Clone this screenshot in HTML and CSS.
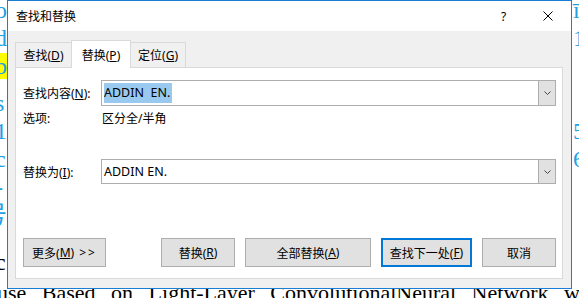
FILE: index.html
```html
<!DOCTYPE html>
<html lang="zh-CN">
<head>
    <meta charset="UTF-8">
    <meta name="viewport" content="width=device-width, initial-scale=1.0">
    <title>查找和替换</title>
    <link rel="stylesheet" href="styles.css">
</head>
<body>
    <div class="doc">
        <div class="line"><span class="l">o</span><span class="r">ī</span></div>
        <div class="line"><span class="l">d</span><span class="r">1</span></div>
        <div class="line"><span class="l"><span class="hl">b</span></span><span class="r"></span></div>
        <div class="gap-s"></div>
        <div class="line"><span class="l">s</span><span class="r"></span></div>
        <div class="line"><span class="l">1</span><span class="r">5</span></div>
        <div class="line"><span class="l">c</span><span class="r">6</span></div>
        <div class="line"><span class="l">-</span><span class="r"></span></div>
        <div class="line"><span class="l wide">号</span><span class="r"></span></div>
        <div class="gap-l"></div>
        <div class="line dark"><span class="l">c</span><span class="r"></span></div>
        <div class="line dark text"><span class="l">use Based on Light-Layer ConvolutionalNeural Network w</span></div>
    </div>

    <div class="dialog">
        <div class="titlebar">
            <span class="title">查找和替换</span>
            <span class="tb-btn help">?</span>
            <span class="tb-btn">
                <svg width="10" height="10" viewBox="0 0 10 10">
                    <path d="M0.5 0.5L9.5 9.5M9.5 0.5L0.5 9.5" stroke="#000" stroke-width="1" fill="none"/>
                </svg>
            </span>
        </div>

        <div class="body">
            <div class="tabs">
                <div class="tab tab-find">查找(<u>D</u>)</div>
                <div class="tab tab-replace active">替换(<u>P</u>)</div>
                <div class="tab tab-goto">定位(<u>G</u>)</div>
            </div>

            <div class="panel">
                <div class="field-row find-row">
                    <label>查找内容(<u>N</u>):</label>
                    <div class="combo">
                        <div class="combo-text"><span class="sel">ADDIN  EN.</span></div>
                        <div class="combo-btn">
                            <svg width="7" height="4" viewBox="0 0 7 4">
                                <path d="M0.5 0.5L3.5 3.5L6.5 0.5" stroke="#444" stroke-width="1" fill="none"/>
                            </svg>
                        </div>
                    </div>
                </div>

                <div class="field-row opts-row">
                    <label>选项:</label>
                    <span class="opts">区分全/半角</span>
                </div>

                <div class="field-row repl-row">
                    <label>替换为(<u>I</u>):</label>
                    <div class="combo">
                        <div class="combo-text">ADDIN EN.</div>
                        <div class="combo-btn">
                            <svg width="7" height="4" viewBox="0 0 7 4">
                                <path d="M0.5 0.5L3.5 3.5L6.5 0.5" stroke="#444" stroke-width="1" fill="none"/>
                            </svg>
                        </div>
                    </div>
                </div>

                <div class="buttons">
                    <button class="btn btn-more">更多(<u>M</u>) <span class="arrows">&gt;&gt;</span></button>
                    <span class="spacer"></span>
                    <button class="btn btn-replace">替换(<u>R</u>)</button>
                    <button class="btn btn-all">全部替换(<u>A</u>)</button>
                    <button class="btn btn-next default">查找下一处(<u>F</u>)</button>
                    <button class="btn btn-cancel">取消</button>
                </div>
            </div>
        </div>
    </div>
</body>
</html>
```

FILE: styles.css
```css
* {
    margin: 0;
    padding: 0;
    box-sizing: border-box;
}

body {
    width: 579px;
    height: 298px;
    overflow: hidden;
    position: relative;
    background: #fff;
    font-family: "Noto Sans", "Noto Sans CJK SC", sans-serif;
    font-size: 12px;
    color: #000;
}

u {
    text-decoration: underline;
    text-underline-offset: 1px;
}

/* document behind the dialog */
.doc {
    margin-top: -4px;
    font-family: "Liberation Serif", "Noto Sans CJK SC", serif;
    font-size: 24px;
    color: #22a0e6;
}

.line {
    display: flex;
    height: 28px;
    line-height: 28px;
    white-space: nowrap;
}

.line .l {
    flex: 0 0 578px;
    margin-left: -5px;
}

.line .l.wide {
    text-indent: -12px;
}

.hl {
    background: #ffff00;
}

.gap-s {
    height: 9px;
}

.gap-l {
    height: 19px;
}

.line.dark {
    color: #000;
}

.line.text {
    margin-top: 3px;
    font-size: 22px;
    word-spacing: 10px;
}

.line.text .l {
    margin-left: -3px;
}

/* dialog */
.dialog {
    position: absolute;
    left: 7px;
    top: 0;
    width: 565px;
    height: 289px;
    border: 1px solid #1a7fd4;
    background: #f0f0f0;
    display: flex;
    flex-direction: column;
}

.titlebar {
    height: 30px;
    background: #fff;
    display: flex;
    align-items: center;
    padding-left: 8px;
}

.title {
    flex: 1;
}

.tb-btn {
    width: 46px;
    height: 30px;
    display: flex;
    align-items: center;
    justify-content: center;
}

.tb-btn.help {
    padding-left: 3px;
}

.body {
    flex: 1;
    padding: 9px 8px 9px 7px;
    display: flex;
    flex-direction: column;
}

.tabs {
    display: flex;
    align-items: flex-end;
    height: 27px;
    position: relative;
    z-index: 1;
}

.tab {
    height: 25px;
    border: 1px solid #d9d9d9;
    border-bottom: none;
    background: #f0f0f0;
    display: flex;
    align-items: center;
    justify-content: center;
}

.tab + .tab {
    margin-left: -1px;
}

.tab-find {
    width: 57px;
}

.tab-replace {
    width: 60px;
}

.tab-goto {
    width: 56px;
}

.tab.active {
    height: 28px;
    margin-bottom: -1px;
    padding-top: 1px;
    background: #fff;
    position: relative;
}

.panel {
    flex: 1;
    background: #fff;
    border: 1px solid #d9d9d9;
    padding: 12px 6px 0 7px;
    display: flex;
    flex-direction: column;
}

.field-row {
    display: flex;
    align-items: center;
}

.field-row label {
    width: 78px;
}

.combo {
    flex: 1;
    display: flex;
    border: 1px solid #adadad;
    background: #fff;
}

.find-row .combo {
    height: 26px;
}

.repl-row {
    margin-top: 31px;
}

.repl-row .combo {
    height: 25px;
}

.combo-text {
    flex: 1;
    padding-left: 2px;
    display: flex;
    align-items: center;
    white-space: pre;
    font-size: 12.5px;
}

.sel {
    background: #99c9ef;
    line-height: 20px;
    padding-right: 2px;
}

.combo-btn {
    width: 17px;
    background: #e1e1e1;
    border-left: 1px solid #adadad;
    display: flex;
    align-items: center;
    justify-content: center;
}

.opts-row {
    height: 20px;
    margin-top: 2px;
}

.opts {
    padding-left: 1px;
}

.buttons {
    display: flex;
    gap: 10px;
    margin-top: 54px;
}

.spacer {
    flex: 1;
}

.btn {
    height: 29px;
    border: 1px solid #adadad;
    background: #e1e1e1;
    font: inherit;
    color: #000;
    display: flex;
    align-items: center;
    justify-content: center;
    white-space: pre;
}

.btn.default {
    border: 2px solid #0078d7;
}

.btn-more {
    width: 83px;
}

.arrows {
    letter-spacing: 2px;
    margin-left: 2px;
}

.btn-replace,
.btn-cancel {
    width: 74px;
}

.btn-all {
    width: 126px;
}

.btn-next {
    width: 91px;
}
```
